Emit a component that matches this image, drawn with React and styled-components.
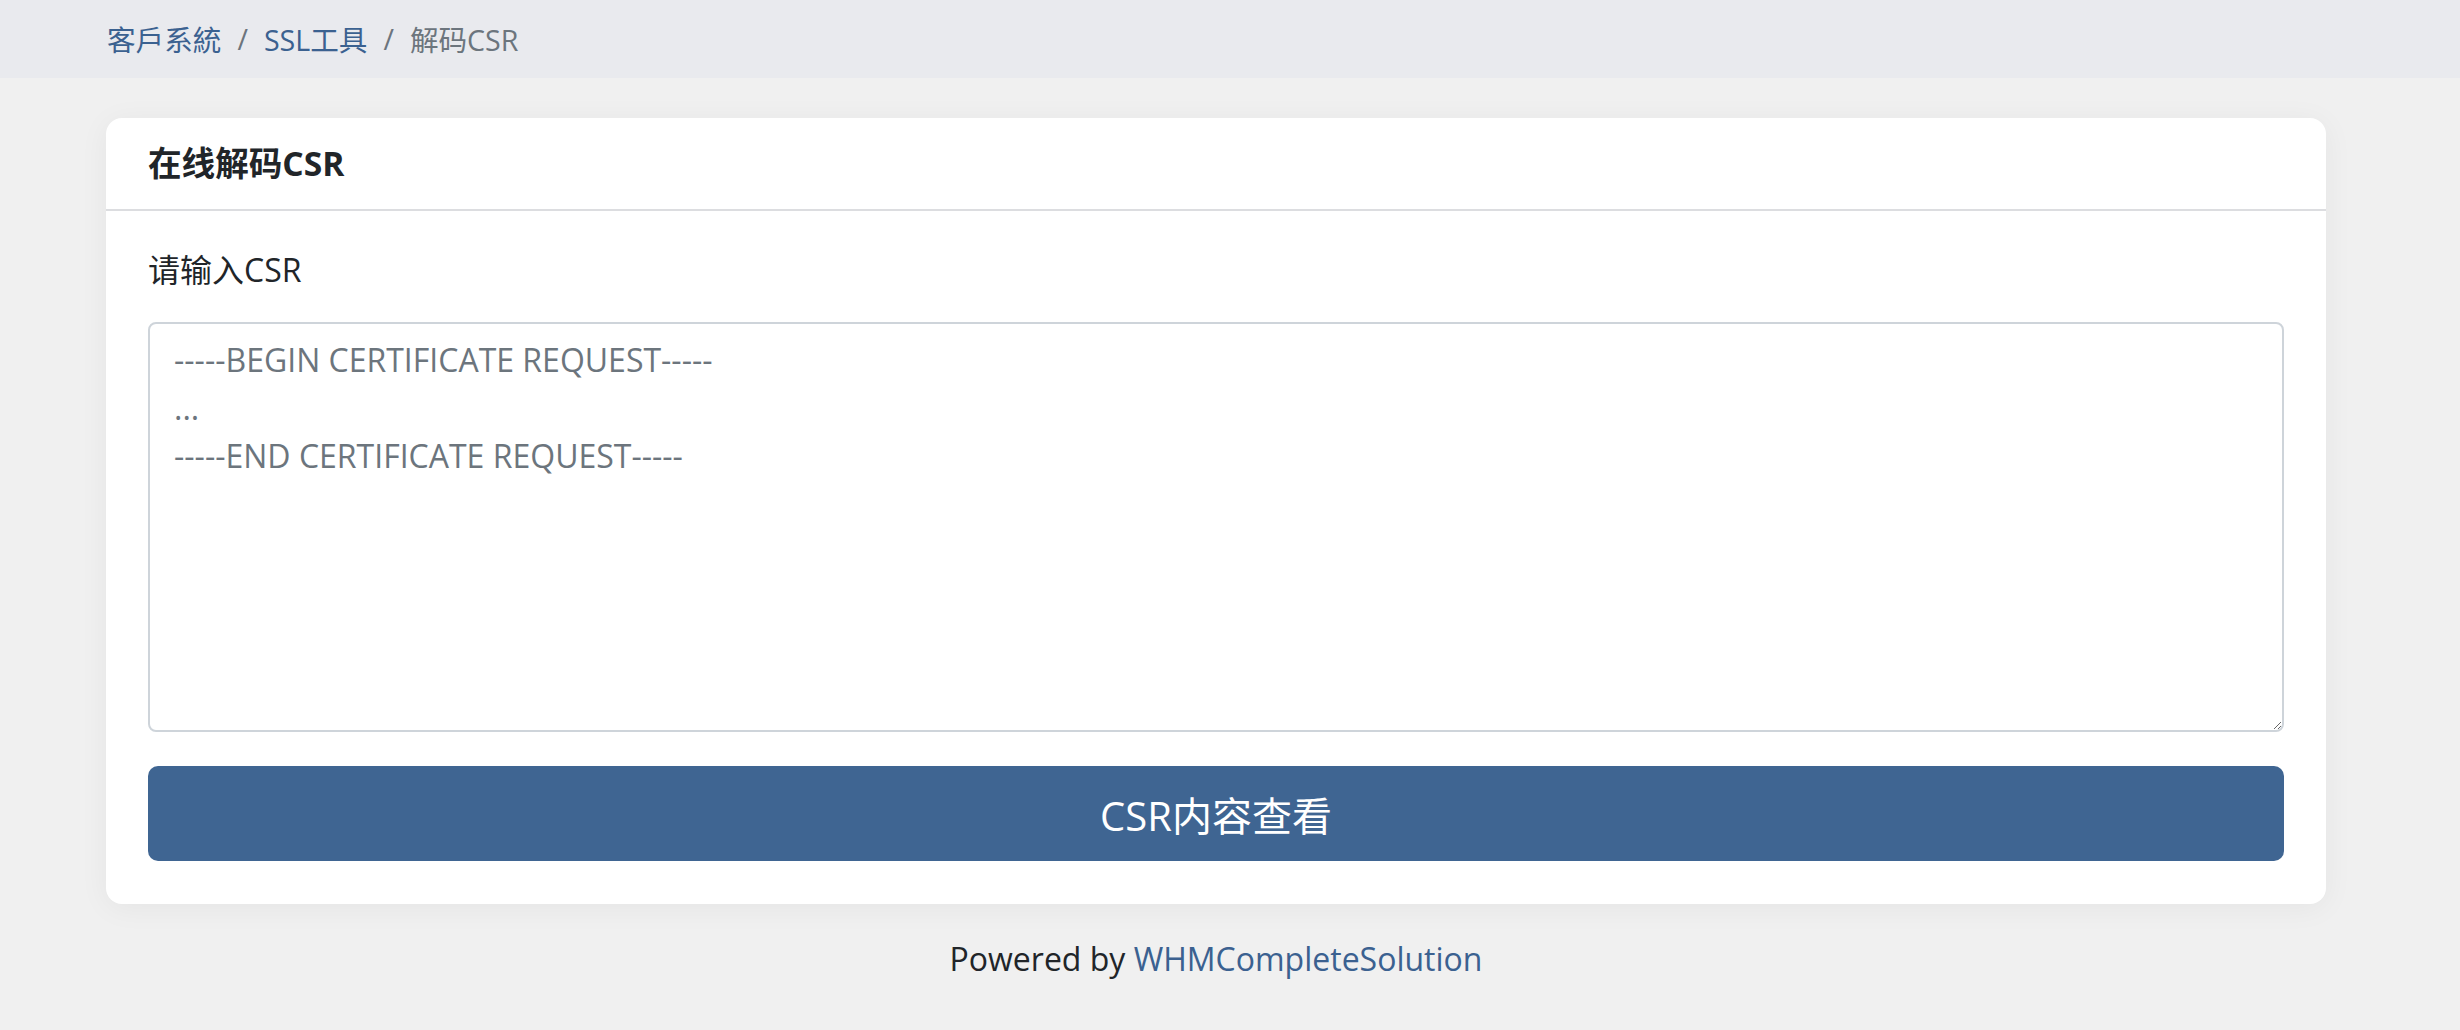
import React from 'react'
import styled, { createGlobalStyle } from 'styled-components'

const GlobalStyle = createGlobalStyle`
  html, body {
    margin: 0;
    padding: 0;
    background: #f0f0f0;
    font-family: "Open Sans", "Noto Sans CJK SC", sans-serif;
    color: #212529;
  }
  * { box-sizing: border-box; }
`

const Breadcrumb = styled.nav`
  height: 78px;
  background: #e9eaee;
  display: flex;
  align-items: center;
  padding-left: 107px;
  padding-bottom: 2px;
  font-size: 28.6px;
`

const Crumb = styled.a`
  color: ${p => (p.$active ? '#6c757d' : '#3b6190')};
  text-decoration: none;
`

const Sep = styled.span`
  color: #6c757d;
  padding: 0 16px;
`

const Main = styled.main`
  width: 2220px;
  margin-left: 106px;
  padding-top: 40px;
`

const Card = styled.section`
  background: #fff;
  border-radius: 16px;
  box-shadow: 0 4px 30px rgba(0, 0, 0, 0.05);
`

const CardHeader = styled.header`
  padding: 24px 42px 25px;
  border-bottom: 2px solid #dcdde0;
  font-size: 33.6px;
  font-weight: 700;
  line-height: 42px;
`

const CardBody = styled.div`
  padding: 35px 42px 43px;
  display: flex;
  flex-direction: column;
`

const Label = styled.label`
  font-size: 32px;
  line-height: 48px;
  margin-bottom: 28px;
`

const TextArea = styled.textarea`
  height: 410px;
  width: 100%;
  border: 2px solid #ced4da;
  border-radius: 8px;
  padding: 12px 24px;
  font-family: inherit;
  font-size: 32px;
  line-height: 48px;
  color: #495057;
  resize: vertical;
  outline: none;

  &::placeholder {
    color: #6c757d;
    opacity: 1;
  }
`

const SubmitButton = styled.button`
  margin-top: 34px;
  height: 95px;
  width: 100%;
  border: none;
  border-radius: 10px;
  background: #3f6592;
  color: #fff;
  font-family: inherit;
  font-size: 40px;
  cursor: pointer;
`

const Footer = styled.footer`
  text-align: center;
  font-size: 32px;
  line-height: 48px;
  padding-top: 31px;

  a {
    color: #3b6190;
    text-decoration: none;
  }
`

export default function App () {
  return (
    <>
      <GlobalStyle />
      <Breadcrumb>
        <Crumb href='#'>客戶系統</Crumb>
        <Sep>/</Sep>
        <Crumb href='#'>SSL工具</Crumb>
        <Sep>/</Sep>
        <Crumb $active>解码CSR</Crumb>
      </Breadcrumb>
      <Main>
        <Card>
          <CardHeader>在线解码CSR</CardHeader>
          <CardBody>
            <Label htmlFor='csr'>请输入CSR</Label>
            <TextArea
              id='csr'
              placeholder={'-----BEGIN CERTIFICATE REQUEST-----\n...\n-----END CERTIFICATE REQUEST-----'}
            />
            <SubmitButton>CSR内容查看</SubmitButton>
          </CardBody>
        </Card>
        <Footer>
          Powered by <a href='#'>WHMCompleteSolution</a>
        </Footer>
      </Main>
    </>
  )
}
